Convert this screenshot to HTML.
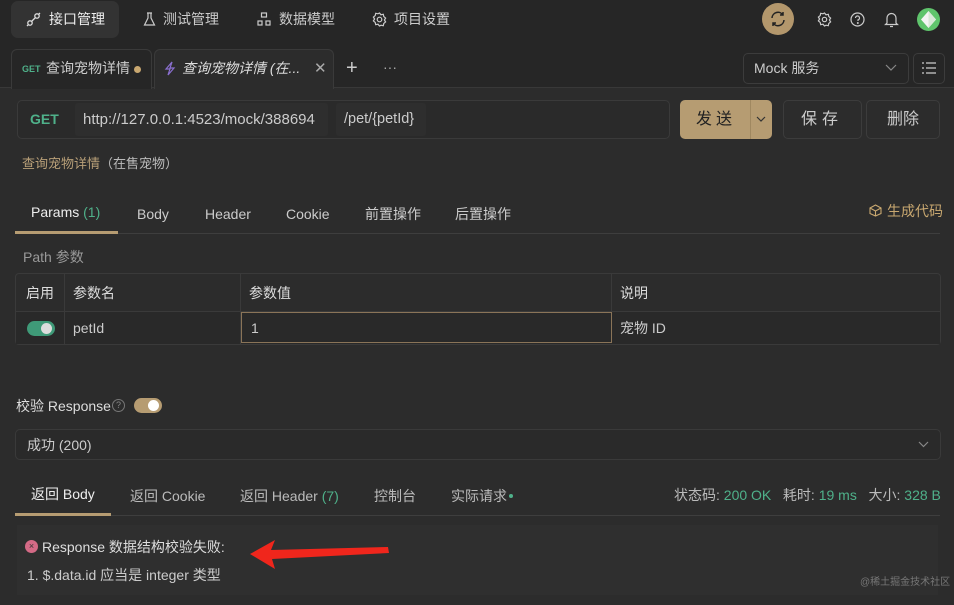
<!DOCTYPE html>
<html><head><meta charset="utf-8"><style>
*{margin:0;padding:0;box-sizing:border-box}
body{width:954px;height:605px;background:#2c2c2c;font-family:"Liberation Sans","Noto Sans CJK SC",sans-serif;color:#d8d8d8;position:relative;overflow:hidden;font-size:14px;line-height:17px}
.a{position:absolute;white-space:nowrap}
.g{color:#4fb18a}
svg{position:absolute}
</style></head><body>
<div class="a" style="left:0;top:0;width:954px;height:88px;background:#262626;border-bottom:1px solid #383838"></div>
<div class="a" style="left:11px;top:1px;width:108px;height:37px;background:#333;border-radius:7px"></div>
<svg style="left:26px;top:12px" width="15" height="15" viewBox="0 0 15 15" fill="none" stroke="#ddd" stroke-width="1.3"><circle cx="4" cy="11" r="2.2"/><circle cx="11" cy="4" r="2.2"/><path d="M5.5 9.5l4-4M1 14l1.5-1.5M14 1l-1.5 1.5"/></svg>
<div class="a" style="left:49px;top:11px;font-size:14px;line-height:17px;color:#eee">接口管理</div>
<svg style="left:143px;top:12px" width="13" height="14" viewBox="0 0 13 14" fill="none" stroke="#ccc" stroke-width="1.2"><path d="M4 1h5M5 1v5L1.5 13h10L8 6V1"/></svg>
<div class="a" style="left:163px;top:11px;font-size:14px;line-height:17px;color:#ccc">测试管理</div>
<svg style="left:257px;top:12px" width="14" height="14" viewBox="0 0 14 14" fill="none" stroke="#ccc" stroke-width="1.2"><rect x="4.5" y="1" width="5" height="4"/><rect x="1" y="9" width="4" height="4"/><rect x="9" y="9" width="4" height="4"/></svg>
<div class="a" style="left:279px;top:11px;font-size:14px;line-height:17px;color:#ccc">数据模型</div>
<svg style="left:372px;top:12px" width="15" height="15" viewBox="0 0 15 15" fill="none" stroke="#ccc" stroke-width="1.2"><circle cx="7.5" cy="7.5" r="2.3"/><path d="M7.5 1l1.5 1.8 2.3-.5.5 2.3 1.8 1.5-1.2 1.9 1.2 1.9-1.8 1.5-.5 2.3-2.3-.5L7.5 14 6 12.2l-2.3.5-.5-2.3L1.4 8.9 2.6 7 1.4 5.1l1.8-1.5.5-2.3 2.3.5z"/></svg>
<div class="a" style="left:394px;top:11px;font-size:14px;line-height:17px;color:#ccc">项目设置</div>
<div class="a" style="left:762px;top:3px;width:32px;height:32px;border-radius:50%;background:#b3976c"></div>
<svg style="left:769px;top:10px" width="18" height="18" viewBox="0 0 18 18" fill="none" stroke="#222" stroke-width="1.5"><path d="M3 8a6 6 0 0 1 11-3M15 10a6 6 0 0 1-11 3M14 2v3h-3M4 16v-3h3"/></svg>
<svg style="left:817px;top:12px" width="15" height="15" viewBox="0 0 15 15" fill="none" stroke="#ccc" stroke-width="1.2"><circle cx="7.5" cy="7.5" r="2.2"/><path d="M7.5 1l1.5 1.8 2.3-.5.5 2.3 1.8 1.5-1.2 1.9 1.2 1.9-1.8 1.5-.5 2.3-2.3-.5L7.5 14 6 12.2l-2.3.5-.5-2.3L1.4 8.9 2.6 7 1.4 5.1l1.8-1.5.5-2.3 2.3.5z"/></svg>
<svg style="left:850px;top:12px" width="15" height="15" viewBox="0 0 15 15" fill="none" stroke="#ccc" stroke-width="1.2"><circle cx="7.5" cy="7.5" r="6.5"/><path d="M5.5 6a2 2 0 1 1 2.5 1.9V9"/><circle cx="7.8" cy="11" r=".4" fill="#ccc"/></svg>
<svg style="left:884px;top:11px" width="15" height="17" viewBox="0 0 15 17" fill="none" stroke="#ccc" stroke-width="1.2"><path d="M3 12V7a4.5 4.5 0 0 1 9 0v5l1.5 1.5h-12zM6 15.5h3"/></svg>
<div class="a" style="left:917px;top:8px;width:23px;height:23px;border-radius:50%;background:#5fc46c"></div>
<svg style="left:921px;top:11px" width="15" height="17" viewBox="0 0 15 17"><path d="M7.5 0L15 8.5 7.5 17 0 8.5z" fill="#f4f4f4"/><path d="M7.5 0L15 8.5 7.5 17z" fill="#d8e8d8"/></svg>
<!-- tabs -->
<div class="a" style="left:11px;top:49px;width:141px;height:40px;border:1px solid #3a3a3a;border-bottom:none;border-radius:6px 6px 0 0;background:#262626"></div>
<div class="a" style="left:22px;top:64px;font-size:9px;line-height:11px;font-weight:bold;color:#4fb18a">GET</div>
<div class="a" style="left:46px;top:60px;font-size:14px;line-height:17px;color:#ccc">查询宠物详情</div>
<div class="a" style="left:134px;top:66px;width:7px;height:7px;border-radius:50%;background:#c9a870"></div>
<div class="a" style="left:154px;top:49px;width:180px;height:40px;border:1px solid #3a3a3a;border-bottom:none;border-radius:6px 6px 0 0;background:#2c2c2c"></div>
<svg style="left:164px;top:61px" width="12" height="15" viewBox="0 0 12 15" fill="none" stroke="#8a6fd0" stroke-width="1.2"><path d="M8 1L2 8h4l-2 6 6-7H6z"/></svg>
<div class="a" style="left:182px;top:60px;font-size:14px;line-height:17px;font-style:italic;color:#ddd">查询宠物详情 (在...</div>
<div class="a" style="left:314px;top:60px;font-size:15px;line-height:17px;color:#aaa">✕</div>
<div class="a" style="left:346px;top:58px;font-size:20px;line-height:20px;color:#ccc">+</div>
<div class="a" style="left:383px;top:60px;font-size:14px;line-height:14px;color:#aaa">···</div>
<div class="a" style="left:743px;top:53px;width:166px;height:31px;border:1px solid #3c3c3c;border-radius:5px;background:#262626"></div>
<div class="a" style="left:754px;top:60px;font-size:14px;line-height:17px;color:#ccc">Mock 服务</div>
<svg style="left:885px;top:64px" width="12" height="8" viewBox="0 0 12 8" fill="none" stroke="#888" stroke-width="1.2"><path d="M1 1l5 5 5-5"/></svg>
<div class="a" style="left:913px;top:53px;width:32px;height:31px;border:1px solid #3c3c3c;border-radius:5px"></div>
<svg style="left:922px;top:62px" width="14" height="12" viewBox="0 0 14 12" stroke="#ccc" stroke-width="1.2"><path d="M4 1h10M4 6h10M4 11h10M0 1h2M0 6h2M0 11h2"/></svg>
<!-- url -->
<div class="a" style="left:17px;top:100px;width:653px;height:39px;border:1px solid #3a3a3a;border-radius:5px;background:#2a2a2a"></div>
<div class="a" style="left:30px;top:111px;font-size:14px;font-weight:bold;color:#4fb18a">GET</div>
<div class="a" style="left:75px;top:103px;width:253px;height:33px;background:#2e2e2e;border-radius:3px"></div>
<div class="a" style="left:83px;top:111px;font-size:15px;color:#ccc">http://127.0.0.1:4523/mock/388694</div>
<div class="a" style="left:336px;top:103px;width:90px;height:33px;background:#2e2e2e;border-radius:3px"></div>
<div class="a" style="left:344px;top:111px;font-size:14.5px;color:#ccc">/pet/{petId}</div>
<div class="a" style="left:680px;top:100px;width:92px;height:39px;background:#b69c72;border-radius:5px"></div>
<div class="a" style="left:750px;top:100px;width:1px;height:39px;background:#a08860"></div>
<div class="a" style="left:696px;top:110px;font-size:16px;line-height:19px;color:#222;letter-spacing:4px">发送</div>
<svg style="left:756px;top:116px" width="10" height="7" viewBox="0 0 10 7" fill="none" stroke="#333" stroke-width="1.2"><path d="M1 1l4 4 4-4"/></svg>
<div class="a" style="left:783px;top:100px;width:79px;height:39px;border:1px solid #3c3c3c;border-radius:5px"></div>
<div class="a" style="left:801px;top:110px;font-size:16px;line-height:19px;color:#ccc;letter-spacing:5px">保存</div>
<div class="a" style="left:866px;top:100px;width:74px;height:39px;border:1px solid #3c3c3c;border-radius:5px"></div>
<div class="a" style="left:887px;top:110px;font-size:16px;line-height:19px;color:#ccc">删除</div>
<div class="a" style="left:22px;top:155px;font-size:13px;color:#b89f78">查询宠物详情<span style="color:#bbb">（在售宠物）</span></div>
<!-- params tabs -->
<div class="a" style="left:31px;top:204px;color:#eee">Params <span class="g">(1)</span></div>
<div class="a" style="left:137px;top:206px;color:#ccc">Body</div>
<div class="a" style="left:205px;top:206px;color:#ccc">Header</div>
<div class="a" style="left:286px;top:206px;color:#ccc">Cookie</div>
<div class="a" style="left:365px;top:206px;color:#ccc">前置操作</div>
<div class="a" style="left:455px;top:206px;color:#ccc">后置操作</div>
<svg style="left:869px;top:204px" width="13" height="13" viewBox="0 0 13 13" fill="none" stroke="#c9a870" stroke-width="1.1"><path d="M6.5 1L12 4v5.5L6.5 12 1 9.5V4zM1 4l5.5 3L12 4M6.5 7v5"/></svg>
<div class="a" style="left:887px;top:203px;color:#c9a870">生成代码</div>
<div class="a" style="left:15px;top:233px;width:925px;height:1px;background:#3e3e3e"></div>
<div class="a" style="left:15px;top:231px;width:103px;height:3px;background:#b69c72"></div>
<div class="a" style="left:23px;top:249px;color:#999">Path 参数</div>
<!-- table -->
<div class="a" style="left:15px;top:273px;width:926px;height:72px;border:1px solid #3a3a3a;border-radius:4px"></div>
<div class="a" style="left:15px;top:311px;width:926px;height:1px;background:#3a3a3a"></div>
<div class="a" style="left:16px;top:312px;width:924px;height:32px;background:#292929"></div>
<div class="a" style="left:64px;top:274px;width:1px;height:70px;background:#3a3a3a"></div>
<div class="a" style="left:240px;top:274px;width:1px;height:70px;background:#3a3a3a"></div>
<div class="a" style="left:611px;top:274px;width:1px;height:38px;background:#3a3a3a"></div>
<div class="a" style="left:26px;top:285px;color:#ddd">启用</div>
<div class="a" style="left:73px;top:285px;color:#ddd">参数名</div>
<div class="a" style="left:249px;top:285px;color:#ddd">参数值</div>
<div class="a" style="left:620px;top:285px;color:#ddd">说明</div>
<div class="a" style="left:27px;top:321px;width:28px;height:15px;border-radius:8px;background:#3f9a78"></div>
<div class="a" style="left:41px;top:323px;width:11px;height:11px;border-radius:50%;background:#ddd"></div>
<div class="a" style="left:73px;top:320px;color:#ccc">petId</div>
<div class="a" style="left:241px;top:312px;width:371px;height:31px;border:1px solid #8a7458"></div>
<div class="a" style="left:251px;top:320px;color:#ccc">1</div>
<div class="a" style="left:620px;top:320px;color:#ccc">宠物 ID</div>
<!-- validate -->
<div class="a" style="left:16px;top:398px;color:#ddd">校验 Response</div>
<div class="a" style="left:112px;top:399px;width:13px;height:13px;border-radius:50%;border:1px solid #777;font-size:9px;color:#888;text-align:center;line-height:11px">?</div>
<div class="a" style="left:134px;top:398px;width:28px;height:15px;border-radius:8px;background:#b69c72"></div>
<div class="a" style="left:148px;top:400px;width:11px;height:11px;border-radius:50%;background:#fff"></div>
<div class="a" style="left:15px;top:429px;width:926px;height:31px;border:1px solid #3a3a3a;border-radius:5px;background:#2a2a2a"></div>
<div class="a" style="left:27px;top:437px;color:#ccc">成功 (200)</div>
<svg style="left:918px;top:441px" width="11" height="7" viewBox="0 0 11 7" fill="none" stroke="#888" stroke-width="1.2"><path d="M1 1l4.5 4.5L10 1"/></svg>
<!-- resp tabs -->
<div class="a" style="left:31px;top:486px;color:#eee">返回 Body</div>
<div class="a" style="left:130px;top:488px;color:#bbb">返回 Cookie</div>
<div class="a" style="left:240px;top:488px;color:#bbb">返回 Header <span class="g">(7)</span></div>
<div class="a" style="left:374px;top:488px;color:#bbb">控制台</div>
<div class="a" style="left:451px;top:488px;color:#bbb">实际请求</div>
<div class="a" style="left:509px;top:494px;width:4px;height:4px;border-radius:50%;background:#4fb18a"></div>
<div class="a" style="left:674px;top:487px;color:#bbb">状态码: <span class="g">200 OK</span>&nbsp;&nbsp;&nbsp;耗时: <span class="g">19 ms</span>&nbsp;&nbsp;&nbsp;大小: <span class="g">328 B</span></div>
<div class="a" style="left:15px;top:515px;width:925px;height:1px;background:#3e3e3e"></div>
<div class="a" style="left:15px;top:513px;width:96px;height:3px;background:#b69c72"></div>
<div class="a" style="left:17px;top:525px;width:921px;height:70px;background:#2f2f2f"></div>
<div class="a" style="left:25px;top:540px;width:13px;height:13px;border-radius:50%;background:#d46a86;font-size:9px;color:#333;text-align:center;line-height:13px">×</div>
<div class="a" style="left:42px;top:539px;color:#ddd">Response 数据结构校验失败:</div>
<div class="a" style="left:27px;top:567px;color:#ccc">1. $.data.id 应当是 integer 类型</div>
<svg style="left:250px;top:538px" width="142" height="32" viewBox="0 0 142 32"><path d="M0 16L25 2 21 12 138 9 139 15 22 21 25 31z" fill="#f0261c"/></svg>
<div class="a" style="left:860px;top:577px;font-size:10px;line-height:12px;color:#777">@稀土掘金技术社区</div>
</body></html>
